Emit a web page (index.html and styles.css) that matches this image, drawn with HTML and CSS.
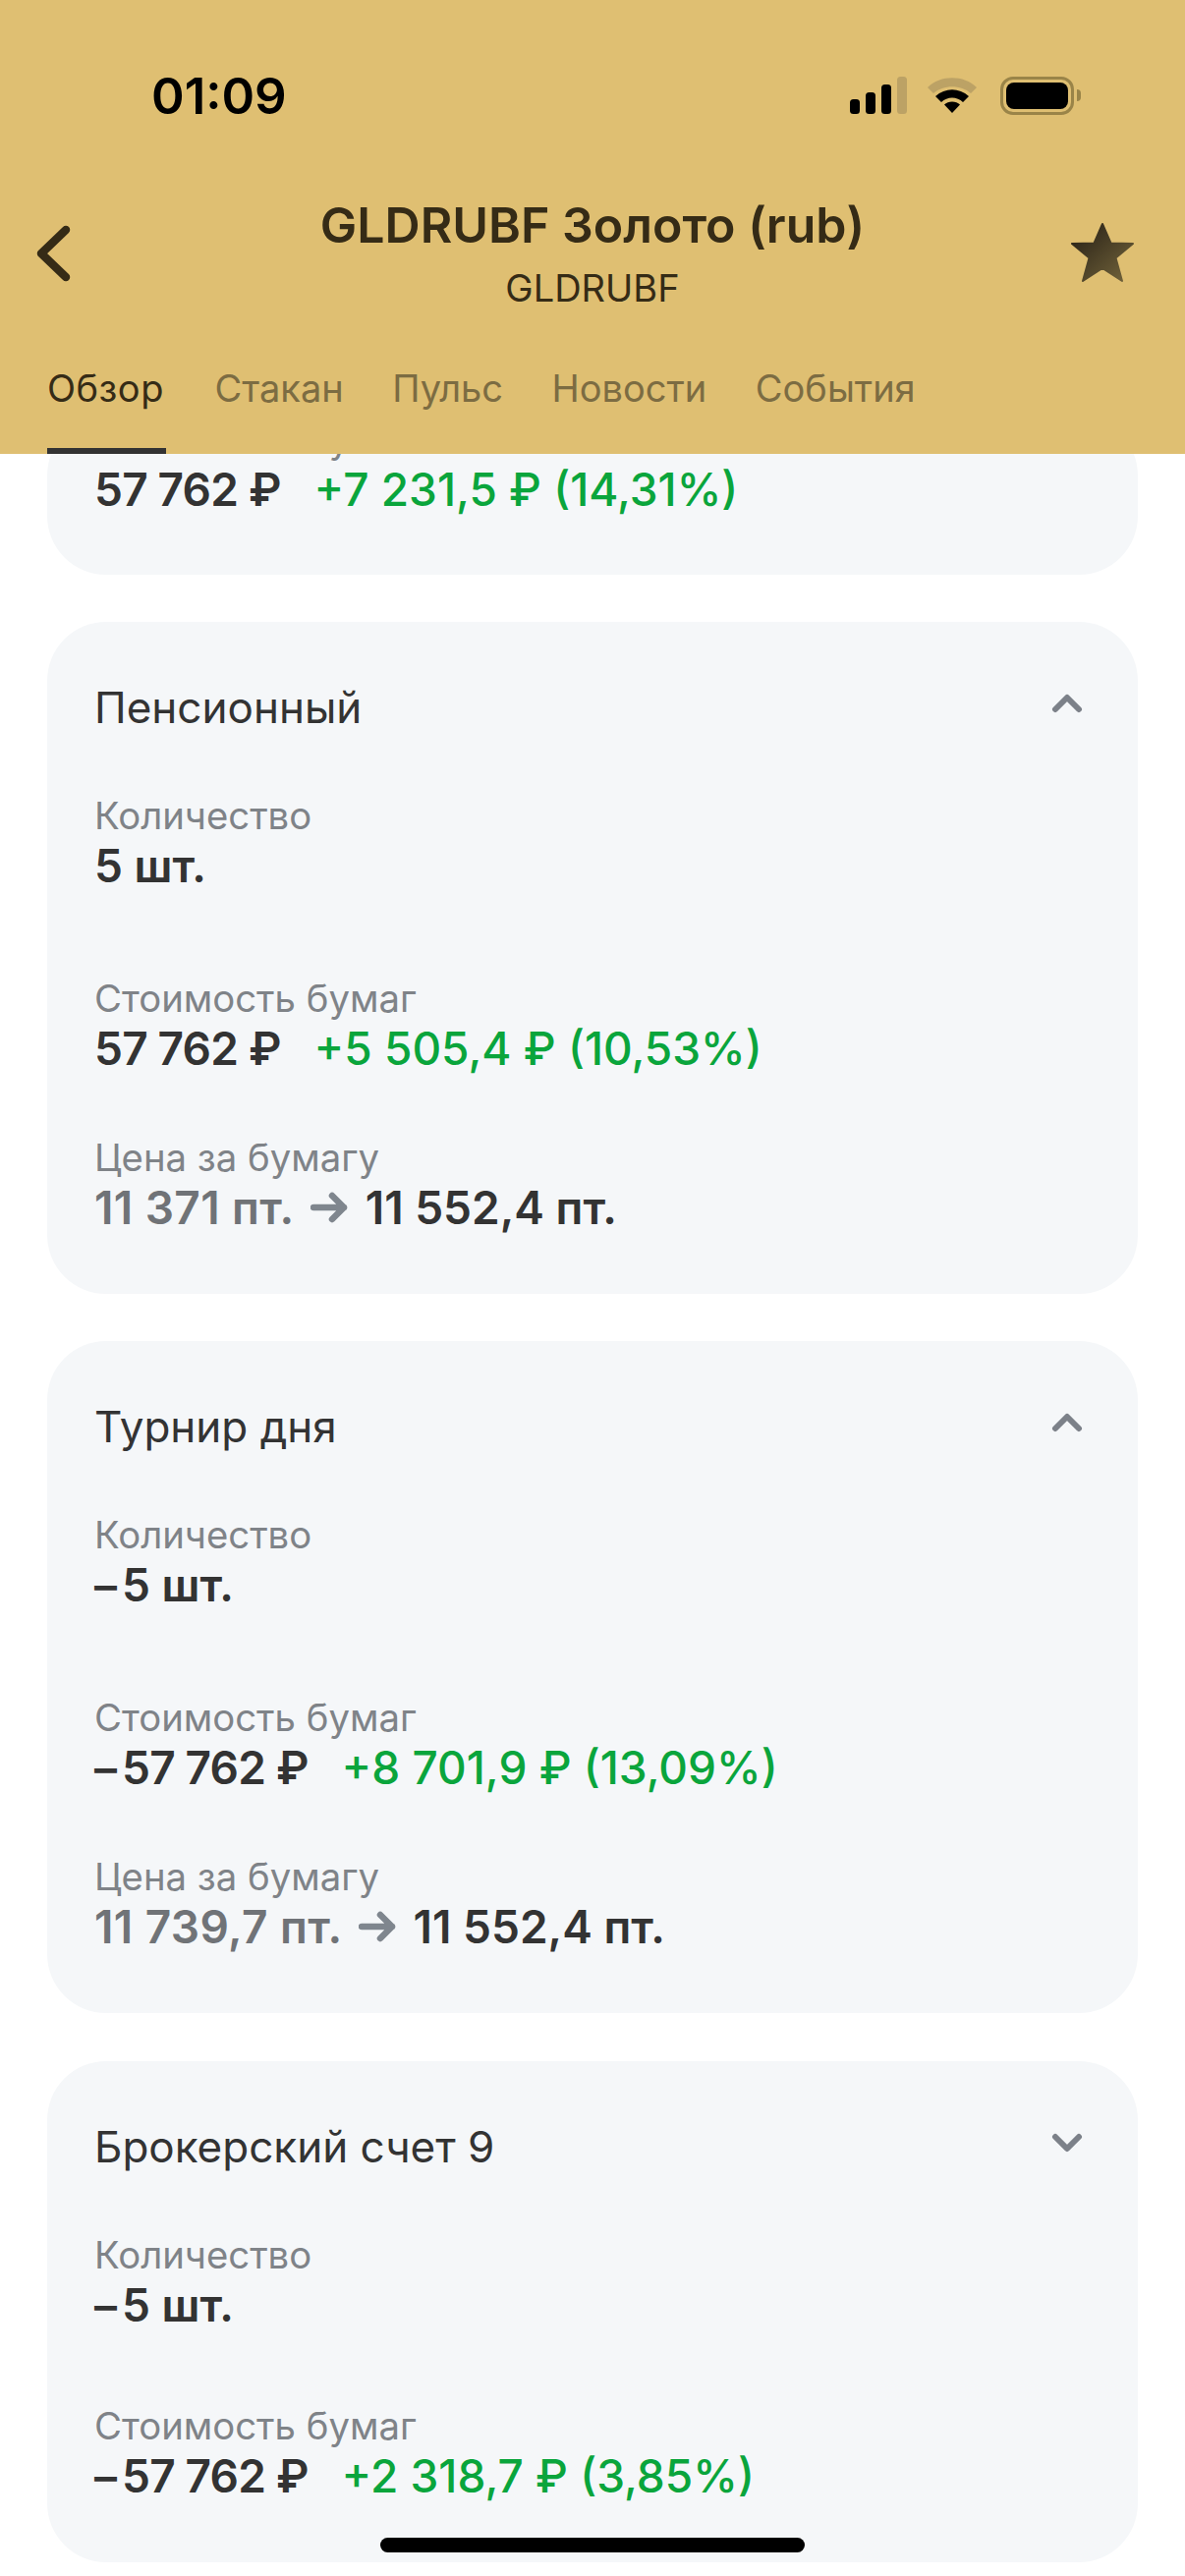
FILE: index.html
```html
<!DOCTYPE html>
<html lang="ru">
<head>
    <meta charset="UTF-8">
    <meta name="viewport" content="width=device-width, initial-scale=1.0">
    <title>GLDRUBF Золото (rub)</title>
    <link rel="stylesheet" href="styles.css">
</head>
<body>
    <div class="page">
        <header class="top">
            <!-- Статус-бар -->
            <div class="status-bar">
                <span class="time">01:09</span>
                <div class="status-icons">
                    <svg class="signal" width="58" height="38" viewBox="0 0 58 38">
                        <rect x="0" y="23" width="10" height="15" rx="3.5" fill="#000"/>
                        <rect x="16" y="16" width="10" height="22" rx="3.5" fill="#000"/>
                        <rect x="32" y="8" width="10" height="30" rx="3.5" fill="#000"/>
                        <rect x="48" y="0" width="10" height="38" rx="3.5" fill="#bca265"/>
                    </svg>
                    <svg class="wifi" width="52" height="38" viewBox="0 0 52 38">
                        <path d="M1 11C14 -2 38 -2 51 11L45 17C35 8 17 8 7 17Z" fill="#bca265"/>
                        <path d="M9 20C19 11 33 11 43 20L37 26C31 20 21 20 15 26Z" fill="#000"/>
                        <path d="M18 28.500C22 24.500 30 24.500 34 28.500L26 37Z" fill="#000"/>
                    </svg>
                    <div class="battery">
                        <div class="battery-body"><div class="battery-level"></div></div>
                        <div class="battery-cap"></div>
                    </div>
                </div>
            </div>

            <!-- Заголовок -->
            <div class="nav">
                <svg class="back" width="40" height="60" viewBox="0 0 40 60">
                    <path d="M33 6L8 30L33 54" fill="none" stroke="#352b16" stroke-width="8.500" stroke-linecap="round" stroke-linejoin="round"/>
                </svg>
                <div class="nav-title">
                    <h1>GLDRUBF Золото (rub)</h1>
                    <div class="ticker">GLDRUBF</div>
                </div>
                <svg class="star" width="68" height="62" viewBox="0 0 68 62">
                    <defs>
                        <linearGradient id="starFill" x1="0" y1="0" x2="1" y2="1">
                            <stop offset="0.150" stop-color="#30281a"/>
                            <stop offset="1" stop-color="#75663c"/>
                        </linearGradient>
                    </defs>
                    <path d="M34 2L42.500 21.500L65 22L47.500 36.500L54 60L34 47L14 60L20.500 36.500L3 22L25.500 21.500Z" fill="url(#starFill)" stroke="url(#starFill)" stroke-width="2" stroke-linejoin="round"/>
                </svg>
            </div>

            <!-- Вкладки -->
            <nav class="tabs">
                <span class="tab tab-active">Обзор</span>
                <span class="tab">Стакан</span>
                <span class="tab">Пульс</span>
                <span class="tab">Новости</span>
                <span class="tab">События</span>
            </nav>
        </header>

        <main class="content">
            <section class="card card-cut">
                <div class="field">
                    <div class="label">Стоимость бумаг</div>
                    <div class="value"><span class="amount">57 762 ₽</span><span class="profit">+7 231,5 ₽ (14,31%)</span></div>
                </div>
            </section>

            <section class="card">
                <div class="card-head">
                    <span class="card-title">Пенсионный</span>
                    <svg class="chevron" width="32" height="20" viewBox="0 0 32 20"><path d="M4 16L16 4L28 16" fill="none" stroke="#7c8189" stroke-width="6" stroke-linecap="round" stroke-linejoin="round"/></svg>
                </div>
                <div class="field field-first">
                    <div class="label">Количество</div>
                    <div class="value">5 шт.</div>
                </div>
                <div class="field">
                    <div class="label">Стоимость бумаг</div>
                    <div class="value"><span class="amount">57 762 ₽</span><span class="profit">+5 505,4 ₽ (10,53%)</span></div>
                </div>
                <div class="field">
                    <div class="label">Цена за бумагу</div>
                    <div class="value"><span class="price-old">11 371 пт.</span><svg class="arrow" width="38" height="32" viewBox="0 0 38 32"><path d="M3 16H34M22 4L34 16L22 28" fill="none" stroke="#7f868e" stroke-width="6.500" stroke-linecap="round" stroke-linejoin="round"/></svg>11 552,4 пт.</div>
                </div>
            </section>

            <section class="card">
                <div class="card-head">
                    <span class="card-title">Турнир дня</span>
                    <svg class="chevron" width="32" height="20" viewBox="0 0 32 20"><path d="M4 16L16 4L28 16" fill="none" stroke="#7c8189" stroke-width="6" stroke-linecap="round" stroke-linejoin="round"/></svg>
                </div>
                <div class="field field-first">
                    <div class="label">Количество</div>
                    <div class="value"><span class="minus">–</span>5 шт.</div>
                </div>
                <div class="field">
                    <div class="label">Стоимость бумаг</div>
                    <div class="value"><span class="minus">–</span><span class="amount">57 762 ₽</span><span class="profit">+8 701,9 ₽ (13,09%)</span></div>
                </div>
                <div class="field">
                    <div class="label">Цена за бумагу</div>
                    <div class="value"><span class="price-old">11 739,7 пт.</span><svg class="arrow" width="38" height="32" viewBox="0 0 38 32"><path d="M3 16H34M22 4L34 16L22 28" fill="none" stroke="#7f868e" stroke-width="6.500" stroke-linecap="round" stroke-linejoin="round"/></svg>11 552,4 пт.</div>
                </div>
            </section>

            <section class="card">
                <div class="card-head">
                    <span class="card-title">Брокерский счет 9</span>
                    <svg class="chevron" width="32" height="20" viewBox="0 0 32 20"><path d="M4 4L16 16L28 4" fill="none" stroke="#7c8189" stroke-width="6" stroke-linecap="round" stroke-linejoin="round"/></svg>
                </div>
                <div class="field">
                    <div class="label">Количество</div>
                    <div class="value"><span class="minus">–</span>5 шт.</div>
                </div>
                <div class="field field-short">
                    <div class="label">Стоимость бумаг</div>
                    <div class="value"><span class="minus">–</span><span class="amount">57 762 ₽</span><span class="profit">+2 318,7 ₽ (3,85%)</span></div>
                </div>
            </section>
        </main>

        <div class="home-bar"></div>
    </div>
</body>
</html>
```

FILE: styles.css
```css
body {
    margin: 0;
    padding: 0;
    background: #ffffff;
    font-family: Inter, "Noto Sans", sans-serif;
    color: #333333;
}

.page {
    position: relative;
    width: 1206px;
    height: 2622px;
    overflow: hidden;
}

/* Шапка */
.top {
    position: relative;
    z-index: 2;
    height: 462px;
    background: #dfbf72;
    color: #352b16;
}

.status-bar {
    height: 194px;
    padding: 0 106px 0 154px;
    display: flex;
    justify-content: space-between;
    align-items: center;
}

.time {
    font-size: 51px;
    font-weight: 600;
    color: #000;
}

.status-icons {
    display: flex;
    align-items: center;
    gap: 23px;
}

.wifi {
    margin-left: -3px;
}

.battery {
    display: flex;
    align-items: center;
    gap: 3px;
}

.battery-body {
    box-sizing: border-box;
    width: 75px;
    height: 39px;
    padding: 3px;
    border: 3px solid #9a8448;
    border-radius: 13px;
}

.battery-level {
    width: 100%;
    height: 100%;
    background: #000;
    border-radius: 8px;
}

.battery-cap {
    width: 4px;
    height: 12px;
    background: #9a8448;
    border-radius: 0 4px 4px 0;
}

.nav {
    height: 136px;
    padding: 0 34px;
    display: grid;
    grid-template-columns: 1fr auto 1fr;
    align-items: center;
}

.back {
    margin-bottom: 8px;
}

.star {
    justify-self: end;
    margin-right: 16px;
    margin-bottom: 10px;
}

.nav-title {
    margin-bottom: 10px;
    text-align: center;
}

.nav-title h1 {
    margin: 0;
    font-size: 50px;
    font-weight: 600;
    line-height: 60px;
}

.ticker {
    margin-top: 12px;
    font-size: 38px;
    line-height: 44px;
}

.tabs {
    height: 132px;
    padding: 0 48px;
    display: flex;
    align-items: flex-end;
    gap: 49.500px;
}

.tab {
    height: 91px;
    font-size: 38px;
    line-height: 48px;
    color: #7c6c42;
}

.tab-active {
    box-sizing: border-box;
    min-width: 121px;
    letter-spacing: 0.5px;
    color: #352b16;
    border-bottom: 6px solid #333333;
}

/* Карточки */
.content {
    padding: 0 48px;
    display: flex;
    flex-direction: column;
    gap: 48px;
}

.card {
    padding: 60px 48px;
    background: #f5f7f9;
    border-radius: 60px;
}

.card:last-child {
    margin-top: 1px;
}

.card-cut {
    margin-top: -38px;
    padding: 0 48px 59px;
}

.card-head {
    height: 54px;
    display: flex;
    justify-content: space-between;
    align-items: center;
}

.card-title {
    font-size: 44px;
    line-height: 52px;
}

.chevron {
    margin-right: 8px;
    margin-bottom: 8px;
}

.field {
    margin-top: 60px;
}

.card-cut .field {
    margin-top: 0;
}

.field-first {
    margin-bottom: 84px;
}

.field-first + .field {
    margin-top: 0;
}

.card-head + .field + .field-short {
    margin-top: 72px;
}

.label {
    font-size: 38.300px;
    line-height: 46px;
    color: #7f8388;
}

.value {
    display: flex;
    align-items: center;
    font-size: 46px;
    font-weight: 600;
    line-height: 56px;
    white-space: pre;
}

.minus {
    margin-right: 5px;
}

.amount {
    letter-spacing: -0.8px;
}

.profit {
    margin-left: 34px;
    font-weight: 500;
    color: #0aa53c;
}

.price-old {
    letter-spacing: 0.4px;
    color: #707377;
}

.arrow {
    margin: 0 18px 0 16px;
}

.home-bar {
    position: absolute;
    left: 387px;
    bottom: 24px;
    width: 432px;
    height: 15px;
    background: #000;
    border-radius: 8px;
}
```
